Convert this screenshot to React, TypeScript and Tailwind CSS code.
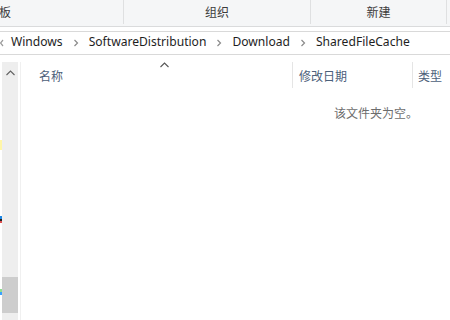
import React from "react";

const latin = "font-['Segoe_UI','Noto_Sans','Noto_Sans_CJK_SC',sans-serif]";
const cjk = "font-['Microsoft_YaHei','Noto_Sans_CJK_SC',sans-serif]";

function Chevron() {
  return (
    <svg width="6" height="8" viewBox="0 0 6 8" className="shrink-0">
      <path d="M1.5 1 L4.5 4 L1.5 7" fill="none" stroke="#8a8a8a" strokeWidth="1.2" />
    </svg>
  );
}

function Caret({ color = "#555" }: { color?: string }) {
  return (
    <svg width="9" height="6" viewBox="0 0 9 6">
      <path d="M0.5 5 L4.5 1 L8.5 5" fill="none" stroke={color} strokeWidth="1.1" />
    </svg>
  );
}

const crumbs = ["Windows", "SoftwareDistribution", "Download", "SharedFileCache"];

export default function App() {
  return (
    <div className="w-[450px] h-[320px] overflow-hidden bg-white flex flex-col text-[12px] text-[#1e1e1e]">
      {/* ribbon */}
      <div className={`h-[27px] shrink-0 flex bg-[#f5f6f7] border-b border-[#dadbdc] text-[#3c3c3c] ${cjk}`}>
        <div className="w-[124px] border-r border-[#dfe0e1] flex items-center pl-0 mb-[2px]">
          <span className="ml-[-1px] leading-none">板</span>
        </div>
        <div className="w-[187px] border-r border-[#dfe0e1] flex items-center justify-center mb-[2px]">
          组织
        </div>
        <div className="w-[136px] border-r border-[#dfe0e1] flex items-center justify-center mb-[2px]">
          新建
        </div>
        <div className="flex-1" />
      </div>

      {/* address bar */}
      <div className={`mt-[4px] h-[24px] shrink-0 flex items-center border-y border-[#d9d9d9] ${latin} text-[12.1px]`}>
        <svg width="4" height="8" viewBox="0 0 4 8" className="shrink-0">
          <path d="M3 1 L0.5 4 L3 7" fill="none" stroke="#9a9a9a" strokeWidth="1.2" />
        </svg>
        <div className="flex items-center ml-[7px] mb-[1px]">
          {crumbs.map((c, i) => (
            <React.Fragment key={c}>
              {i > 0 && (
                <span className="mx-[10px] flex items-center">
                  <Chevron />
                </span>
              )}
              <span className="leading-none">{c}</span>
            </React.Fragment>
          ))}
        </div>
      </div>

      {/* body */}
      <div className="flex-1 flex mt-[7px] min-h-0">
        {/* nav pane scrollbar */}
        <div className="w-[21px] shrink-0 flex border-r border-[#f0f0f0]">
          <div className="w-[2px] flex flex-col">
            <div className="h-[78px]" />
            <div className="h-[10px] bg-[#fff6a8]" />
            <div className="h-[66px]" />
            <div className="h-[3px] bg-[#1e88e5]" />
            <div className="h-[2px] bg-[#222]" />
            <div className="h-[2px] bg-[#e05050]" />
            <div className="h-[66px]" />
            <div className="h-[3px] bg-[#8ee08e]" />
            <div className="h-[3px] bg-[#3aa0ff]" />
          </div>
          <div className="w-[16px] bg-[#eeeeee] flex flex-col">
            <div className="h-[21px] flex items-center justify-center">
              <Caret color="#606060" />
            </div>
            <div className="h-[194px]" />
            <div className="h-[36px] bg-[#cdcdcd]" />
          </div>
        </div>

        {/* file list */}
        <div className="flex-1 flex flex-col">
          <div className={`h-[26px] flex text-[#4c607a] ${cjk}`}>
            <div className="w-[272px] border-r border-[#e5e5e5] flex items-start pt-[4px] relative">
              <span className="ml-[18px] mt-[1px]">名称</span>
              <span className="absolute left-[139px] top-[0px]">
                <Caret />
              </span>
            </div>
            <div className="w-[120px] border-r border-[#e5e5e5] pl-[6px] pt-[5px]">修改日期</div>
            <div className="flex-1 pl-[5px] pt-[5px]">类型</div>
          </div>
          <div className={`mt-[16px] pl-[313px] text-[#6d6d6d] ${cjk}`}>该文件夹为空。</div>
        </div>
      </div>
    </div>
  );
}
